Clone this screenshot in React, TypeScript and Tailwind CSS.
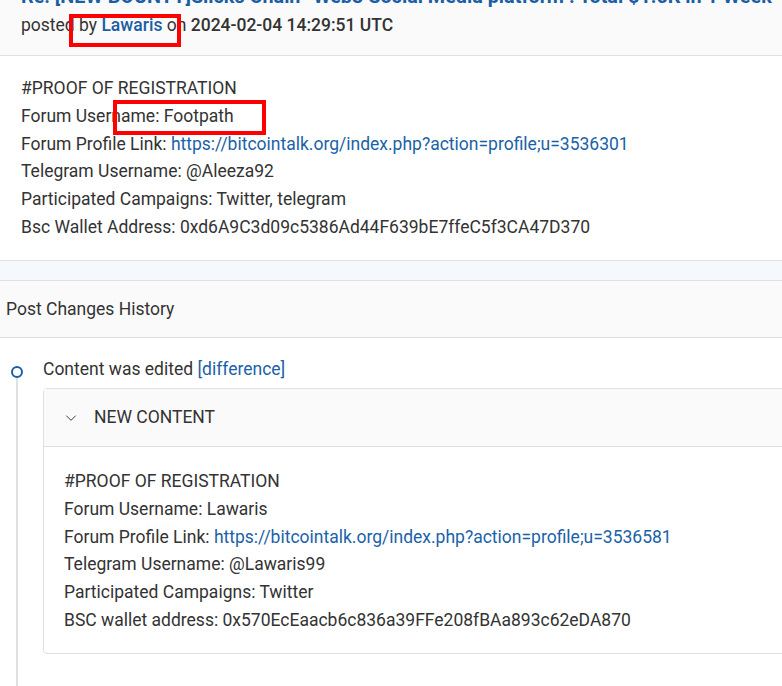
import React from "react";

const Line = ({ children }: { children: React.ReactNode }) => (
  <div className="leading-[27.8px] whitespace-nowrap">{children}</div>
);

export default function App() {
  return (
    <div
      className="relative w-[782px] h-[686px] overflow-hidden bg-white text-[17.5px] text-[#333333]"
      style={{ fontFamily: "Roboto, 'Liberation Sans', sans-serif" }}
    >
      {/* header */}
      <div className="flex flex-col bg-[#fafafa] border-b border-[#e0e0e0] h-[56px] px-[21px]">
        <div className="-mt-[15px] h-[24px] leading-[24px] text-[19.8px] font-bold text-[#1a5fa5] whitespace-nowrap">
          Re: [NEW BOUNTY]Slicks Chain- Web3 Social Media platform : Total $1.5K in 1 Week
        </div>
        <div className="mt-[4px] leading-[24px] whitespace-nowrap">
          posted by <span className="font-medium text-[#1a5fa5]">Lawaris</span> on{" "}
          <span className="font-medium">2024-02-04 14:29:51 UTC</span>
        </div>
      </div>

      {/* body */}
      <div className="px-[21px] pt-[19px] h-[204px]">
        <Line>#PROOF OF REGISTRATION</Line>
        <Line>Forum Username: Footpath</Line>
        <Line>
          Forum Profile Link:{" "}
          <span className="text-[#1a62a8]">https://bitcointalk.org/index.php?action=profile;u=3536301</span>
        </Line>
        <Line>Telegram Username: @Aleeza92</Line>
        <Line>Participated Campaigns: Twitter, telegram</Line>
        <Line>Bsc Wallet Address: 0xd6A9C3d09c5386Ad44F639bE7ffeC5f3CA47D370</Line>
      </div>

      <div className="border-t border-[#e0e0e0] bg-[#f5f9fd] h-[20px]" />
      <div className="border-t border-b border-[#e0e0e0] bg-[#fafafa] h-[58px] px-[6px] flex items-center">
        Post Changes History
      </div>

      {/* timeline */}
      <div className="flex pt-[19px]">
        <div className="w-[43px] shrink-0 flex flex-col items-center pr-[9px]">
          <div className="w-[12px] h-[12px] rounded-full border-2 border-[#1a5fa5] mt-[9px]" />
          <div className="w-[2px] bg-[#e0e0e0] h-[400px]" />
        </div>
        <div className="flex-1 -mr-[20px]">
          <div className="leading-[24px]">
            Content was edited <span className="text-[#1a62a8]">[difference]</span>
          </div>
          <div className="mt-[7px] border border-[#e0e0e0] rounded-[4px]">
            <div className="bg-[#fafafa] border-b border-[#e0e0e0] h-[58px] flex items-center pl-[20px]">
              <svg width="14" height="14" viewBox="0 0 24 24" fill="none" stroke="#333" strokeWidth="1.6" className="mr-[16px]">
                <path d="M4 8l8 8 8-8" />
              </svg>
              <span>NEW CONTENT</span>
            </div>
            <div className="px-[20px] pt-[21px] pb-[18px]">
              <Line>#PROOF OF REGISTRATION</Line>
              <Line>Forum Username: Lawaris</Line>
              <Line>
                Forum Profile Link:{" "}
                <span className="text-[#1a62a8]">https://bitcointalk.org/index.php?action=profile;u=3536581</span>
              </Line>
              <Line>Telegram Username: @Lawaris99</Line>
              <Line>Participated Campaigns: Twitter</Line>
              <Line>BSC wallet address: 0x570EcEaacb6c836a39FFe208fBAa893c62eDA870</Line>
            </div>
          </div>
        </div>
      </div>

      {/* red highlight boxes */}
      <div className="absolute left-[69px] top-[14px] w-[112px] h-[33px] border-[4px] border-[#ff0000]" />
      <div className="absolute left-[113px] top-[100px] w-[153px] h-[35px] border-[4px] border-[#ff0000]" />
    </div>
  );
}
